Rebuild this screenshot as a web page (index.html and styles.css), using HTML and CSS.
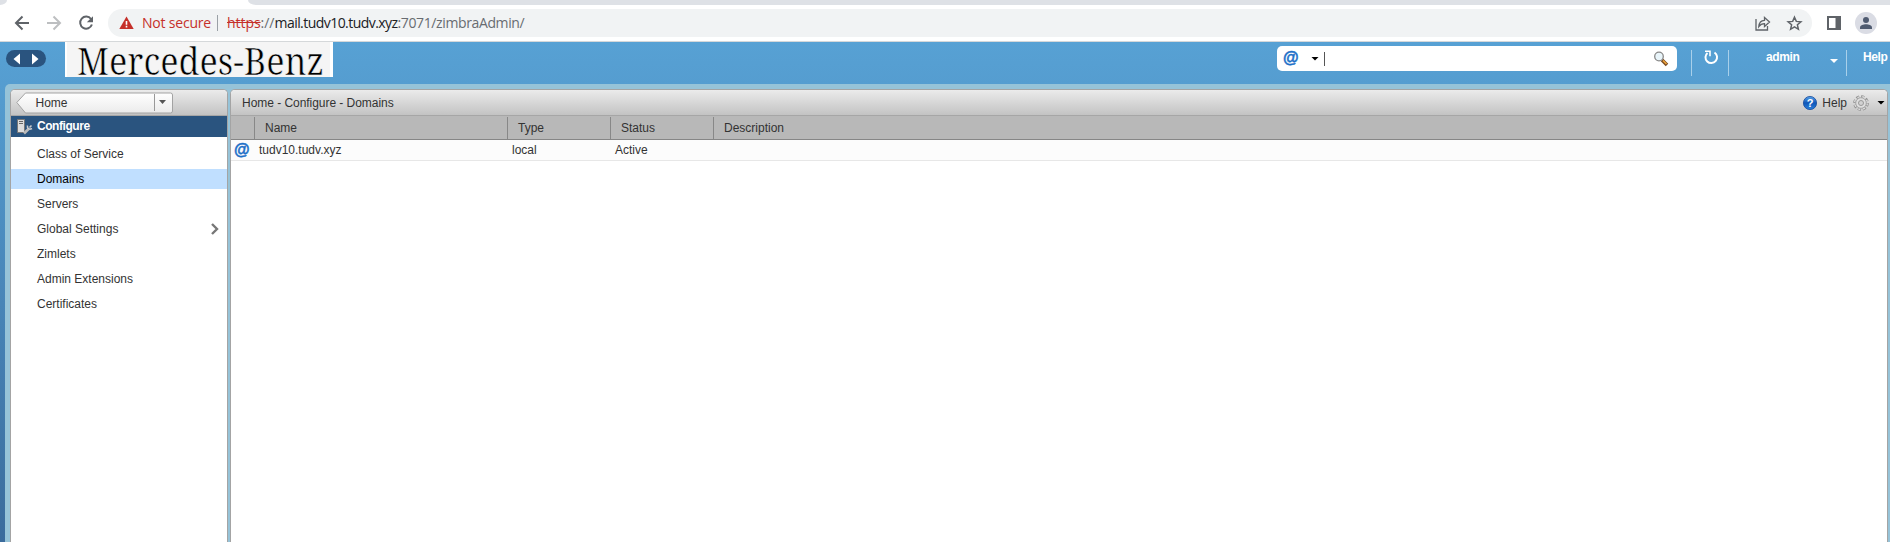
FILE: index.html
```html
<!DOCTYPE html>
<html lang="en">
<head>
<meta charset="utf-8">
<title>Zimbra Administration</title>
<link rel="stylesheet" href="styles.css">
</head>
<body>
<svg class="defs" width="0" height="0">
  <defs>
    <linearGradient id="blue" x1="0" y1="0" x2="0" y2="1"><stop offset="0" stop-color="#5aa2ea"/><stop offset=".5" stop-color="#0f57b8"/><stop offset="1" stop-color="#2a80dc"/></linearGradient>
    <linearGradient id="tag" x1="0" y1="0" x2="0" y2="1"><stop offset="0" stop-color="#ffffff"/><stop offset="1" stop-color="#ebebeb"/></linearGradient>
  </defs>
</svg>
<div class="tabs"><div class="tab-prev"></div><div class="tab-active"></div><div class="tab-rest"></div></div>
<div class="toolbar">
  <svg class="nav" width="96" height="36" viewBox="0 0 96 36" fill="none" stroke="#5f6368" stroke-width="2">
    <path d="M29 18H16M22.500 11.500L16 18l6.500 6.500"/>
    <path stroke="#bdbfc1" d="M47 18h13M53.500 11.500L60 18l-6.500 6.500"/>
    <path d="M91 14a6 6 0 1 0 .9 5.500"/><path d="M93 11.200v6h-6.200z" fill="#5f6368" stroke="none"/>
  </svg>
  <div class="omnibox">
    <svg class="warn" width="15" height="14" viewBox="0 0 15 14"><path d="M7.500 0.500L14.700 13H.3z" fill="#c5302a"/><path d="M7.500 5v3.700M7.500 9.700v1.800" stroke="#fff" stroke-width="1.600"/></svg>
    <span class="notsecure">Not secure</span><span class="sep"></span>
    <span class="url"><span class="scheme">https</span><span class="dim">://</span><span class="host">mail.tudv10.tudv.xyz</span><span class="dim path">:7071/zimbraAdmin/</span></span>
    <svg class="actions" width="50" height="24" viewBox="0 0 50 24" fill="none" stroke="#5f6368" stroke-width="1.300">
      <path d="M2 8v11h11.500v-4"/><path d="M4.800 15.500c.3-4 2.300-6 5.700-6.200V6.500l5 4.500-5 4.500v-2.800c-2.500 0-4.300.9-5.700 2.800z"/>
      <path stroke-width="1.500" d="M40.500 6.200l1.800 4.200 4.600.4-3.500 3 1 4.500-3.900-2.400-3.900 2.400 1-4.500-3.500-3 4.600-.4z"/>
    </svg>
  </div>
  <svg class="panel-icon" width="14" height="14"><path d="M1 1h12v12H1z" fill="#fff" stroke="#5f6368" stroke-width="2"/><path d="M8.500 1H13v12H8.500z" fill="#5f6368"/></svg>
  <svg class="avatar" width="22" height="22"><circle cx="11" cy="11" r="11" fill="#dadce4"/><circle cx="11" cy="8" r="3" fill="#4f5b70"/><path d="M5 17v-1.500c0-2 3.500-3.200 6-3.200s6 1.200 6 3.200V17z" fill="#4f5b70"/></svg>
</div>
<div class="app">
  <div class="banner">
    <svg class="history" width="40" height="17"><rect width="40" height="17" rx="8.500" fill="#2a547f"/><path d="M14 3.500v11L7.500 9zM26 3.500v11L32.500 9z" fill="#fff"/></svg>
    <div class="logo"><svg width="268" height="35"><path d="M2 0h263v35H2z" fill="#f5f5f5"/><text class="logo-text" x="12" y="32.700" textLength="247" lengthAdjust="spacingAndGlyphs">Mercedes-Benz</text></svg></div>
    <div class="search">
      <span class="at">@</span><span class="caret"></span><span class="cursor"></span>
      <svg class="lens" width="16" height="16"><path d="M9 9l5 5" stroke="#7a4b22" stroke-width="3.600"/><path d="M10 9.500l3.500 3.500" stroke="#f0a53a" stroke-width="1.600"/><circle cx="6" cy="5.500" r="4.300" fill="#e9f5fa" stroke="#888" stroke-width="1.300"/></svg>
    </div>
    <div class="divider d1"></div>
    <svg class="refresh" width="15" height="15" fill="none" stroke="#fff" stroke-width="2"><path d="M10.500 2.500a5.800 5.800 0 1 1-7 .4"/><path d="M1 1.300h5v5" stroke-width="1.600"/></svg>
    <div class="divider d2"></div>
    <span class="admin">admin</span><span class="caret white"></span>
    <div class="divider d3"></div><span class="top-help">Help</span>
  </div>
  <div class="workspace">
    <div class="sidebar">
      <div class="side-head"><svg width="158" height="22"><path d="M.8 10.500L9.500 1H154.500q2 0 2 2v16q0 2-2 2H9.500z" fill="url(#tag)" stroke="#a3a3a3"/><path d="M138.500 2v17" stroke="#999"/><path d="M143 8h7L146.500 12z" fill="#555"/><text x="19.500" y="15">Home</text></svg></div>
      <div class="side-title"><svg width="17" height="17"><path d="M1.500 1.500h7v13h-7z" fill="#ddd" stroke="#777"/><path d="M3 3.500h4M3 5.500h4" stroke="#666"/><path d="M8 15.500l4.500-4.500" stroke="#bbb" stroke-width="2.600"/><path d="M11.500 7.500c-.5 3 1.500 4.500 4.500 3M15.500 7.500l-2 2" fill="none" stroke="#ccc" stroke-width="1.600"/></svg><span>Configure</span></div>
      <div class="items">
        <div class="item">Class of Service</div><div class="item selected">Domains</div><div class="item">Servers</div>
        <div class="item">Global Settings<svg class="chev" width="8" height="12"><path d="M1 1l5 5-5 5" fill="none" stroke="#777" stroke-width="2.400"/></svg></div>
        <div class="item">Zimlets</div><div class="item">Admin Extensions</div><div class="item">Certificates</div>
      </div>
    </div>
    <div class="content">
      <div class="content-head"><span class="crumb">Home - Configure - Domains</span>
        <svg class="help-icon" width="14" height="14"><circle cx="7" cy="7" r="6.600" fill="url(#blue)" stroke="#174a9a" stroke-width=".8"/><text class="q" x="7" y="11" text-anchor="middle">?</text></svg>
        <span class="help-label">Help</span>
        <svg class="gear" width="16" height="16"><circle cx="8" cy="8" r="6.600" fill="none" stroke="#8f8f8f" stroke-width="2.400" stroke-dasharray="3.200 1.984"/><circle cx="8" cy="8" r="6.300" fill="none" stroke="#dcdcdc" stroke-width="1.600" stroke-dasharray="2 2.948" stroke-dashoffset="-.5"/><circle cx="8" cy="8" r="5.300" fill="#dedede" stroke="#999" stroke-width=".8"/><circle cx="8" cy="8" r="2.500" fill="#d2d2d2" stroke="#999"/></svg>
        <span class="caret"></span>
      </div>
      <div class="row columns"><div class="c0"></div><div class="c1">Name</div><div class="c2">Type</div><div class="c2">Status</div><div class="c3">Description</div></div>
      <div class="row data"><div class="c0"><span class="at">@</span></div><div class="c1">tudv10.tudv.xyz</div><div class="c2">local</div><div class="c2">Active</div></div>
    </div>
  </div>
</div>
</body>
</html>
```
FILE: styles.css
```css
* { box-sizing: border-box; }
body { margin: 0; width: 1890px; height: 542px; overflow: hidden; display: flex; flex-direction: column; font: 12px/14px "Liberation Sans", Arial, sans-serif; color: #333; background: #fff; }
.defs { position: absolute; }
svg { display: block; flex: none; overflow: visible; }
svg text { fill: #333; }
.tabs { height: 5px; display: flex; background: #fff; flex: none; }
.tab-prev { width: 7px; background: #dee1e6; border-bottom-right-radius: 7px 5px; }
.tab-active { width: 241px; }
.tab-rest { flex: 1; background: #dee1e6; border-bottom-left-radius: 8px 5px; }
.toolbar { height: 37px; flex: none; display: flex; align-items: center; border-bottom: 1px solid #d5d8da; }
.nav { margin-right: 12px; }
.omnibox { width: 1704px; height: 28px; border-radius: 14px; background: #f1f3f4; display: flex; align-items: center; font: 14px/20px "Open Sans", "Noto Sans", sans-serif; white-space: nowrap; }
.warn { margin: 0 8px 0 11px; }
.notsecure { color: #c5302a; width: 75px; letter-spacing: -0.2px; }
.sep { width: 1px; height: 16px; background: #9aa0a6; margin-right: 9px; }
.url { flex: 1; display: flex; }
.scheme { color: #c5302a; text-decoration: line-through; letter-spacing: -0.05px; }
.dim { color: #686c71; }
.path { letter-spacing: -0.38px; }
.host { color: #202124; letter-spacing: -0.55px; }
.actions { margin-right: 8px; }
.panel-icon { margin: 0 14px 0 15px; }
.app { flex: 1; background: linear-gradient(#57a1d4, #559dd0 42px, #3a6b9c); display: flex; flex-direction: column; }
.banner { height: 42px; flex: none; display: flex; align-items: flex-start; }
.banner > * { flex: none; }
.history { margin: 8px 19px 0 6px; }
.logo { width: 268px; height: 35px; background: #fff; margin-right: 944px; }
.logo-text { font: 38px/34px "Noto Serif", "Liberation Serif", serif; fill: #000; stroke: #f5f5f5; stroke-width: 0.6px; }
.search { width: 400px; height: 25px; margin-top: 4px; border-radius: 5px; background: #fff; display: flex; align-items: center; padding-left: 6px; }
.at { font: bold 16px/16px "Liberation Sans", sans-serif; color: #1c70c8; -webkit-text-stroke: 0.5px #1c70c8; }
.search .at { width: 16px; margin-top: -2px; }
.caret { width: 8px; height: 4px; background: #000; clip-path: polygon(0 0, 100% 0, 50% 100%); }
.caret.white { background: #fff; margin: 17px 8px 0 32px; }
.search .caret { margin-left: 12px; }
.cursor { width: 1px; height: 14px; background: #555; margin-left: 5px; }
.lens { margin: 0 8px 0 auto; }
.divider { width: 1px; height: 26px; margin-top: 8px; background: #a9d0ea; }
.d1 { margin-left: 14px; }
.refresh { margin: 8px 9px 0 12px; }
.admin, .top-help { color: #fff; font-weight: bold; padding-top: 8px; letter-spacing: -0.4px; }
.admin { margin-left: 37px; width: 32px; }
.top-help { margin-left: 16px; }
.workspace { flex: 1; margin-left: 5px; padding: 5px 2px 0 5px; background: #96c3d8; border-top-left-radius: 5px; display: flex; gap: 2px; }
.sidebar, .content { border: 1px solid #a4a4a4; border-bottom: 0; border-radius: 5px 5px 0 0; background: #fff; overflow: hidden; }
.sidebar { width: 218px; flex: none; }
.content { flex: 1; }
.side-head, .content-head { height: 26px; background: linear-gradient(#ebebeb, #c3c3c3); border-bottom: 1px solid #a6a6a6; display: flex; align-items: center; }
.side-head { padding-left: 5px; }
.side-title { height: 21px; background: #2a547f; color: #fff; font-weight: bold; display: flex; align-items: center; padding: 0 0 2px 5px; gap: 4px; letter-spacing: -0.45px; }
.side-title svg { margin-top: 2px; }
.items { padding-top: 7px; }
.item { height: 20px; margin-bottom: 5px; line-height: 20px; padding: 0 8px 0 26px; display: flex; align-items: center; justify-content: space-between; }
.selected { background: #c0dfff; color: #000; }
.crumb { margin-left: 11px; margin-right: auto; letter-spacing: -0.04px; }
.help-label { margin: 0 6px 0 5px; }
.gear { margin-right: 8px; }
.content-head .caret { margin-right: 2px; }
.q { font: bold 11px "Liberation Sans", sans-serif; }
svg .q { fill: #fff; }
svg .logo-text { fill: #000; }
.row { display: flex; }
.columns { height: 24px; background: #b8b8b8; border-bottom: 1px solid #868686; padding-top: 1px; line-height: 22px; }
.columns > div + div { border-left: 1px solid #888; padding-left: 10px; }
.data { height: 21px; line-height: 20px; background: #fcfcfc; border-bottom: 1px solid #e7e7e7; }
.data > div + div { padding-left: 5px; }
.c0 { width: 23px; padding-left: 3px; }
.data .c0 { display: flex; align-items: center; padding-bottom: 1px; }
.c1 { width: 253px; }
.c2 { width: 103px; }
.c3 { flex: 1; }
```
